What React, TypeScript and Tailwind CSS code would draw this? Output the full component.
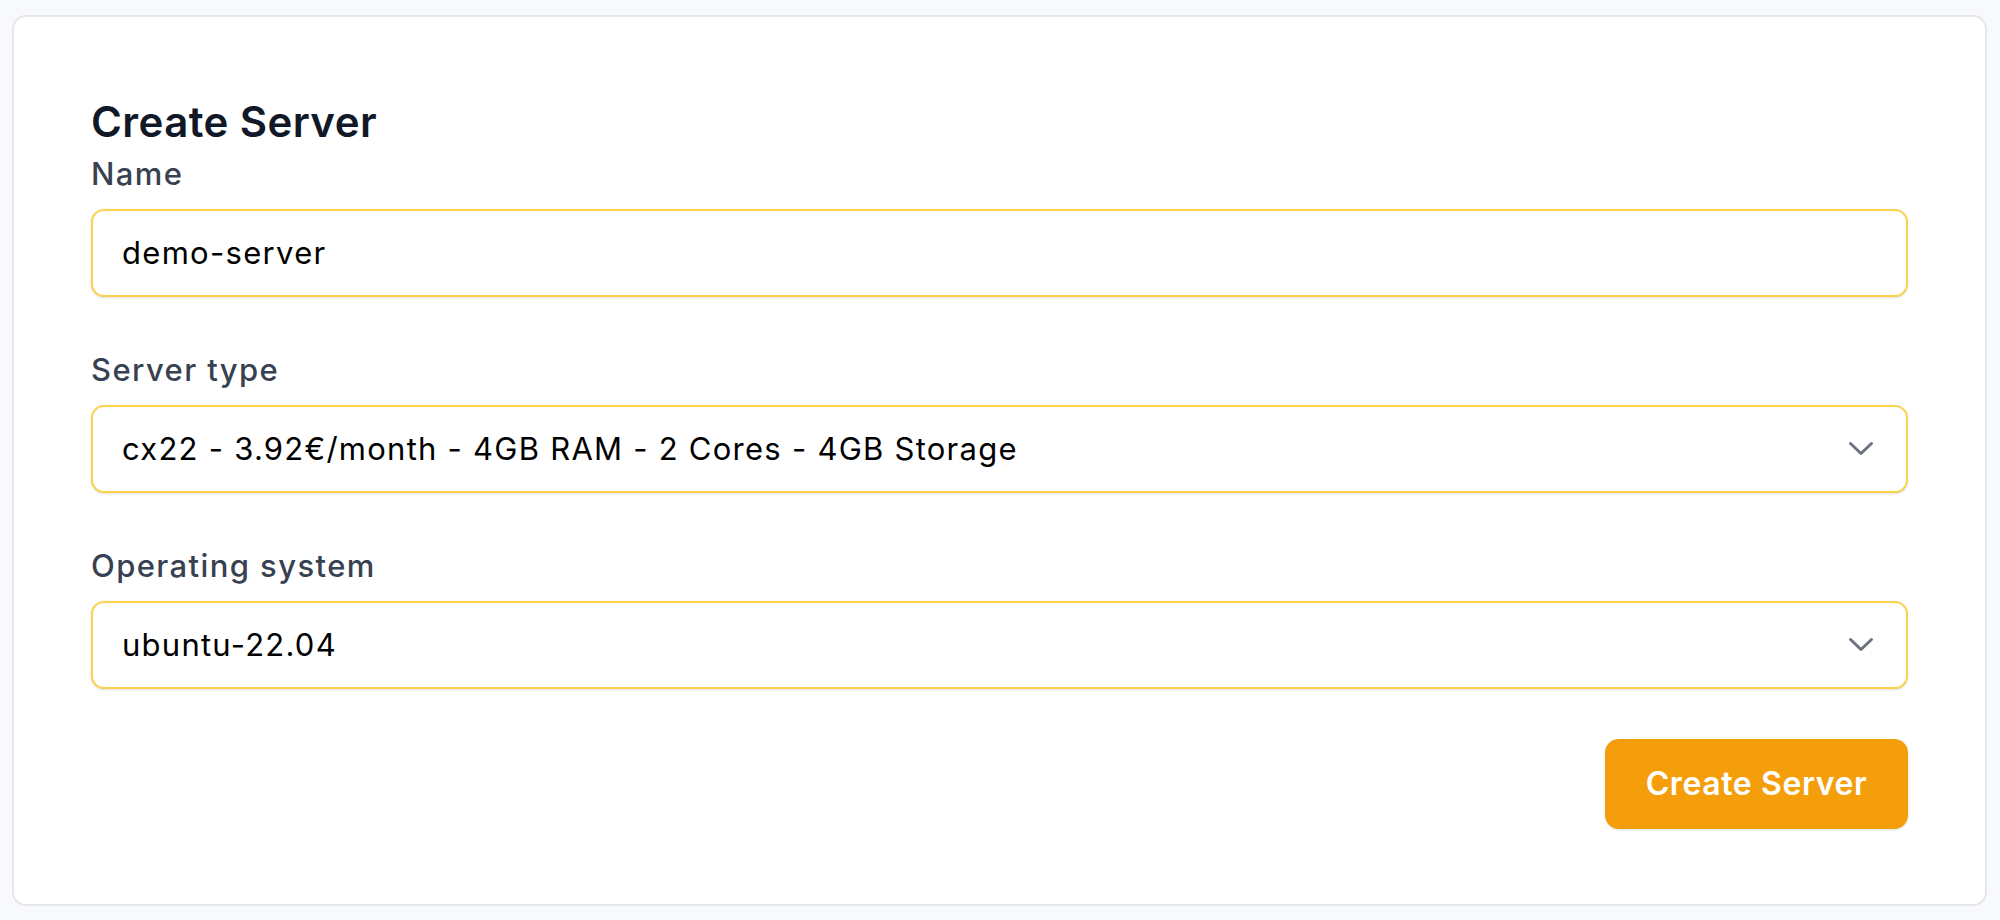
import React from 'react';

const fields = [
  { label: 'Server type', value: 'cx22 - 3.92€/month - 4GB RAM - 2 Cores - 4GB Storage' },
  { label: 'Operating system', value: 'ubuntu-22.04' },
];

function Chevron() {
  return (
    <svg width="26" height="16" viewBox="0 0 26 16" fill="none" className="shrink-0">
      <polyline points="2.5,2.5 13,12.5 23.5,2.5" stroke="#6b7280" strokeWidth="3" strokeLinecap="round" strokeLinejoin="round" />
    </svg>
  );
}

function Label({ children }: { children: React.ReactNode }) {
  return <div className="mb-[15px] h-[40px] text-[31px] leading-[40px] tracking-[1.4px] font-medium text-[#374151]">{children}</div>;
}

export default function App() {
  return (
    <div className="min-h-screen bg-[#f8f9fb] pt-[15px] pl-[12px] pr-[13px] pb-[14px] font-['Inter','Liberation_Sans',sans-serif]">
      <div className="h-[891px] rounded-[14px] border-2 border-[#e6e7eb] bg-white pt-[80px] px-[77px]">
        <h1 className="h-[50px] text-[42px] leading-[50px] tracking-[0.4px] font-semibold text-[#111827]">Create Server</h1>

        <div className="mt-[7px]">
          <Label>Name</Label>
          <div className="flex h-[88px] items-center rounded-[13px] border-2 border-[#fcd34d] bg-white pl-[29px] text-[31px] leading-[40px] tracking-[1.3px] text-black shadow-sm">
            demo-server
          </div>
        </div>

        {fields.map((f) => (
          <div key={f.label} className="mt-[53px]">
            <Label>{f.label}</Label>
            <div className="flex h-[88px] items-center justify-between rounded-[13px] border-2 border-[#fcd34d] bg-white pl-[29px] pr-[32px] text-[31px] leading-[40px] tracking-[1.25px] text-black shadow-sm">
              <span>{f.value}</span>
              <Chevron />
            </div>
          </div>
        ))}

        <div className="mt-[50px] flex justify-end">
          <button className="h-[90px] w-[303px] rounded-[14px] bg-[#f59e0b] text-[32px] tracking-[0.6px] font-semibold text-white shadow-sm">
            Create Server
          </button>
        </div>
      </div>
    </div>
  );
}
